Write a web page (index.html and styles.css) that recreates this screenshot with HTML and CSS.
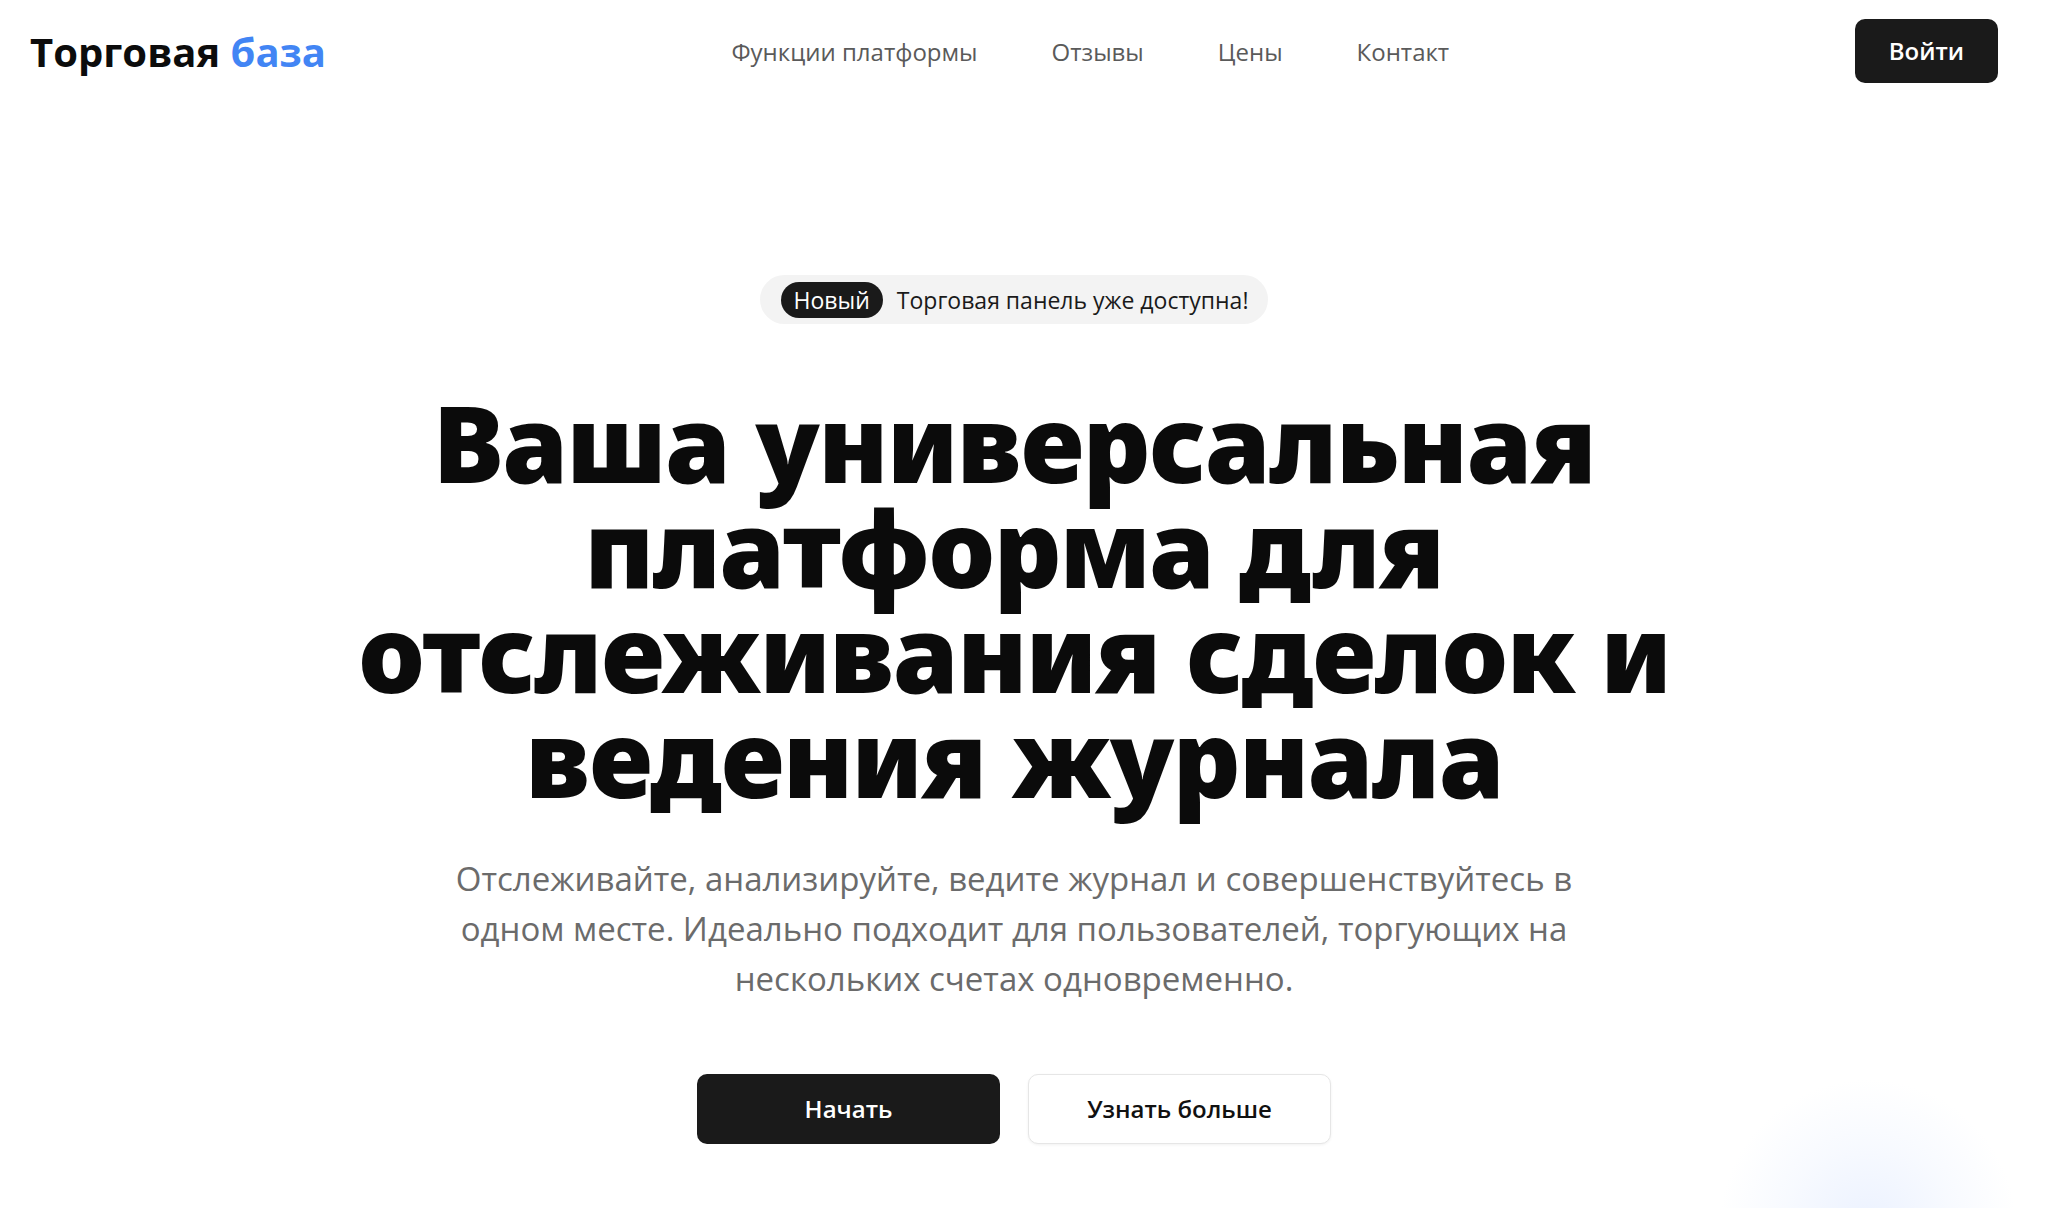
FILE: index.html
```html
<!DOCTYPE html>
<html lang="ru">
<head>
    <meta charset="UTF-8">
    <meta name="viewport" content="width=device-width, initial-scale=1.0">
    <title>Торговая база</title>

    <link rel="stylesheet" href="styles.css">
</head>
<body>
    <div class="page">
        <header class="topbar">
            <a href="#" class="logo">Торговая <span>база</span></a>
            <nav class="menu">
                <a href="#">Функции платформы</a>
                <a href="#">Отзывы</a>
                <a href="#">Цены</a>
                <a href="#">Контакт</a>
            </nav>
            <a href="#" class="btn-login">Войти</a>
        </header>

        <main class="hero">
            <div class="badge">
                <span class="badge-tag">Новый</span>
                Торговая панель уже доступна!
            </div>
            <h1>Ваша универсальная платформа для отслеживания сделок и ведения журнала</h1>
            <p class="lead">Отслеживайте, анализируйте, ведите журнал и совершенствуйтесь в одном месте. Идеально подходит для пользователей, торгующих на нескольких счетах одновременно.</p>
            <div class="actions">
                <a href="#" class="btn btn-dark">Начать</a>
                <a href="#" class="btn btn-light">Узнать больше</a>
            </div>
        </main>

        <div class="glow"></div>
    </div>
</body>
</html>
```

FILE: styles.css
```css
body {
    font-family: "Open Sans", "Noto Sans", sans-serif;
    margin: 0;
    background-color: #fff;
    color: #111;
}

a {
    text-decoration: none;
}

.page {
    position: relative;
    height: 100vh;
    overflow: hidden;
    padding-right: 20px; /* место под полосу прокрутки */
}

.topbar {
    display: flex;
    align-items: center;
    padding: 19px 30px 0 30px;
}

.logo {
    font-size: 40px;
    font-weight: 700;
    color: #0c0c0c;
}

.logo span {
    color: #4285f4;
}

.menu {
    flex: 1;
    display: flex;
    justify-content: center;
    gap: 74px;
}

.menu a {
    font-size: 24px;
    color: #5a5a5a;
}

.btn-login {
    background-color: #1a1a1a;
    color: #fff;
    font-size: 24px;
    font-weight: 600;
    padding: 0 34px;
    height: 64px;
    line-height: 64px;
    border-radius: 10px;
}

.hero {
    display: flex;
    flex-direction: column;
    align-items: center;
    text-align: center;
    padding-top: 192px;
}

.badge {
    display: flex;
    align-items: center;
    gap: 14px;
    background-color: #f3f3f3;
    border-radius: 25px;
    height: 49px;
    padding: 0 20px 0 21px;
    font-size: 23px;
    color: #1a1a1a;
}

.badge-tag {
    background-color: #1a1a1a;
    color: #fff;
    border-radius: 18px;
    padding: 0 13px;
    height: 36px;
    line-height: 36px;
}

h1 {
    font-family: "Noto Sans", "Open Sans", sans-serif;
    font-weight: 900;
    font-size: 106px;
    line-height: 105px;
    letter-spacing: -1.6px;
    color: #0b0b0b;
    max-width: 1360px;
    margin: 66px 0 0 0;
}

.lead {
    font-size: 33px;
    line-height: 50px;
    color: #6b6b6b;
    max-width: 1160px;
    margin: 44px 0 0 0;
}

.actions {
    display: flex;
    gap: 28px;
    margin-top: 70px;
}

.btn {
    display: block;
    width: 303px;
    height: 70px;
    line-height: 70px;
    border-radius: 10px;
    font-size: 24px;
    font-weight: 600;
    box-sizing: border-box;
}

.btn-dark {
    background-color: #1a1a1a;
    color: #fff;
}

.btn-light {
    background-color: #fff;
    color: #111;
    border: 1px solid #e6e6e6;
    line-height: 68px;
    box-shadow: 0 1px 3px rgba(0, 0, 0, 0.06);
}

.glow {
    position: absolute;
    right: 30px;
    bottom: -170px;
    width: 300px;
    height: 300px;
    border-radius: 50%;
    background: radial-gradient(circle, rgba(230, 238, 255, 0.8) 0%, rgba(240, 245, 255, 0.5) 40%, rgba(255, 255, 255, 0) 70%);
}
```
